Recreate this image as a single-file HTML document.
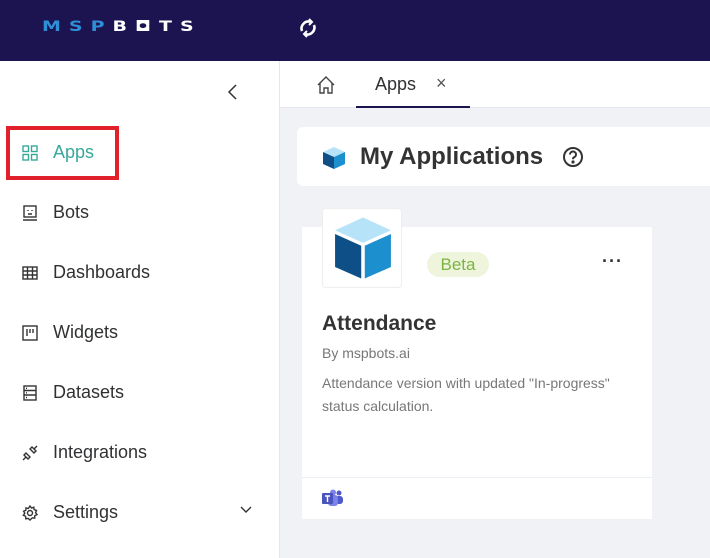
<!DOCTYPE html>
<html><head><style>
*{margin:0;padding:0;box-sizing:border-box}
body{width:710px;height:558px;overflow:hidden;font-family:"Liberation Sans",Arial,sans-serif;background:#f0f2f5;position:relative;color:#303133}
.hdr{position:absolute;left:0;top:0;width:710px;height:61px;background:#1b1450}
.logo{position:absolute;left:42px;top:18px;font-size:19px;font-weight:bold;letter-spacing:8px;color:#2f8fd6;font-family:"DejaVu Sans",sans-serif;transform:scaleY(0.75);transform-origin:left top}
.logo span{color:#fff}
.side{position:absolute;left:0;top:61px;width:280px;height:497px;background:#fff;border-right:1px solid #e4e7ed}
.item{position:absolute;left:22px;font-size:18px;color:#303133;display:flex;align-items:center}
.item svg{margin-right:15px}
.tabs{position:absolute;left:280px;top:61px;width:430px;height:47px;background:#fff;border-bottom:1px solid #e4e7ed}
.panel{position:absolute;left:297px;top:127px;width:420px;height:59px;background:#fff;border-radius:6px}
.card{position:absolute;left:302px;top:227px;width:350px;height:292px;background:#fff}
</style></head><body>
<div class="hdr">
 <div class="logo">MSP<span>B◘TS</span></div>
 <svg style="position:absolute;left:297px;top:17px" width="22" height="22" viewBox="0 0 22 22" fill="none" stroke="#fff" stroke-width="2.6"><path d="M5 14a7 7 0 0 1 9-9"/><path d="M17 8a7 7 0 0 1-9 9"/><path d="M12 2l3 3-3 3" stroke-width="2"/><path d="M10 20l-3-3 3-3" stroke-width="2"/></svg>
</div>
<div class="side">
 <svg style="position:absolute;left:226px;top:22px" width="12" height="18" viewBox="0 0 12 18"><path d="M10 2L3 9l7 7" fill="none" stroke="#333" stroke-width="1.5"/></svg>
 <div style="position:absolute;left:6px;top:65px;width:113px;height:54px;border:4px solid #e0202b"></div>
 <div class="item" style="top:81px;color:#3aa79a"><svg width="16" height="16" viewBox="0 0 16 16" fill="none" stroke="#3aa79a" stroke-width="1.4"><rect x="1" y="1" width="5.5" height="5.5"/><rect x="9.5" y="1" width="5.5" height="5.5"/><rect x="1" y="9.5" width="5.5" height="5.5"/><rect x="9.5" y="9.5" width="5.5" height="5.5"/></svg>Apps</div>
 <div class="item" style="top:141px"><svg width="16" height="16" viewBox="0 0 16 16" fill="none" stroke="#333" stroke-width="1.4"><rect x="2" y="1" width="12" height="11"/><path d="M1 15h14M6 5v1M10 5v1M6 9h4"/></svg>Bots</div>
 <div class="item" style="top:201px"><svg width="16" height="16" viewBox="0 0 16 16" fill="none" stroke="#333" stroke-width="1.4"><rect x="1" y="2" width="14" height="12"/><path d="M1 6h14M1 10h14M5.5 2v12M10.5 2v12"/></svg>Dashboards</div>
 <div class="item" style="top:261px"><svg width="16" height="16" viewBox="0 0 16 16" fill="none" stroke="#333" stroke-width="1.4"><rect x="1" y="1" width="14" height="14"/><path d="M5 4v7M8 4v4M11 4v4"/></svg>Widgets</div>
 <div class="item" style="top:321px"><svg width="16" height="16" viewBox="0 0 16 16" fill="none" stroke="#333" stroke-width="1.4"><rect x="2" y="1" width="12" height="14"/><path d="M2 5.5h12M2 10h12M4 3.3h1M4 7.8h1M4 12.5h1"/></svg>Datasets</div>
 <div class="item" style="top:381px"><svg width="16" height="16" viewBox="0 0 16 16" fill="none" stroke="#333" stroke-width="1.4"><path d="M1 15l3-3M15 1l-3 3M4 8l4 4-2 2-4-4zM8 4l4 4 2-2-4-4z"/></svg>Integrations</div>
 <div class="item" style="top:441px"><svg width="16" height="16" viewBox="0 0 16 16" fill="none" stroke="#333" stroke-width="1.4"><circle cx="8" cy="8" r="2.5"/><path d="M8 1l1.5 2 2.3-.8.3 2.4 2.4.8-.9 2.3 1.4 1.9-2.2 1-.1 2.5-2.4-.3L8 15l-1.8-1.6-2.4.4-.2-2.5-2.2-1L2.8 8.2 1.6 6.2l2.2-.9L4 2.9l2.3.6z"/></svg>Settings</div>
 <svg style="position:absolute;left:239px;top:444px" width="14" height="10" viewBox="0 0 14 10"><path d="M2 2l5 5 5-5" fill="none" stroke="#333" stroke-width="1.4"/></svg>
</div>
<div class="tabs">
 <svg style="position:absolute;left:36px;top:14px" width="20" height="20" viewBox="0 0 20 20" fill="none" stroke="#444" stroke-width="1.4"><path d="M2 10L10 2l8 8M4 8v10h4v-5h4v5h4V8"/></svg>
 <div style="position:absolute;left:76px;top:0;width:114px;height:47px;border-bottom:2px solid #1b1450"></div>
 <div style="position:absolute;left:95px;top:13px;font-size:18px">Apps</div>
 <div style="position:absolute;left:156px;top:12px;font-size:18px;color:#555">×</div>
</div>
<div class="panel">
 <svg style="position:absolute;left:24px;top:18px" width="26" height="26" viewBox="0 0 26 26"><path d="M13 2l11 5-11 5L2 7z" fill="#b7e3f8"/><path d="M2 7l11 5v12L2 19z" fill="#0d4f86"/><path d="M24 7l-11 5v12l11-5z" fill="#1c8fce"/></svg>
 <div style="position:absolute;left:63px;top:16px;font-size:24px;font-weight:bold;color:#333">My Applications</div>
 <svg style="position:absolute;left:265px;top:19px" width="22" height="22" viewBox="0 0 22 22" fill="none" stroke="#333" stroke-width="2"><circle cx="11" cy="11" r="9"/><path d="M8 8.5a3 3 0 1 1 4 2.8c-.8.4-1 1-1 2" /><circle cx="11" cy="16" r=".6" fill="#333"/></svg>
</div>
<div class="card">
 <div style="position:absolute;left:125px;top:25px;width:62px;height:25px;border-radius:13px;background:#eef5dc;color:#7cb342;font-size:17px;text-align:center;line-height:25px">Beta</div>
 <div style="position:absolute;left:300px;top:24px;font-size:18px;letter-spacing:1px;color:#333;font-weight:bold">···</div>
 <div style="position:absolute;left:20px;top:85px;font-size:21px;font-weight:bold;color:#333">Attendance</div>
 <div style="position:absolute;left:20px;top:118px;font-size:14px;color:#777">By mspbots.ai</div>
 <div style="position:absolute;left:20px;top:145px;font-size:14px;line-height:23px;color:#777;width:318px">Attendance version with updated "In-progress" status calculation.</div>
 <div style="position:absolute;left:0;top:250px;width:350px;height:1px;background:#ebeef5"></div>
 <svg style="position:absolute;left:20px;top:262px" width="22" height="18" viewBox="0 0 22 18"><circle cx="17" cy="4" r="2.5" fill="#5059c9"/><rect x="13" y="7" width="8" height="8" rx="3" fill="#5059c9"/><circle cx="11" cy="3.5" r="3" fill="#7b83eb"/><rect x="6" y="6" width="10" height="11" rx="3" fill="#7b83eb"/><rect x="0" y="4" width="11" height="11" rx="1" fill="#4b53bc"/><path d="M3 7h5M5.5 7v6" stroke="#fff" stroke-width="1.4"/></svg>
</div>
<div style="position:absolute;left:322px;top:208px;width:80px;height:80px;background:#fff;border:1px solid #eee;border-radius:4px">
 <svg style="position:absolute;left:7px;top:6px" width="66" height="66" viewBox="0 0 26 26"><path d="M13 1l11 5-11 5L2 6z" fill="#b7e3f8"/><path d="M2 7.5l10.3 4.6V25L2 20.5z" fill="#0d4f86"/><path d="M24 7.5l-10.3 4.6V25L24 20.5z" fill="#1c8fce"/></svg>
</div>
</body></html>
